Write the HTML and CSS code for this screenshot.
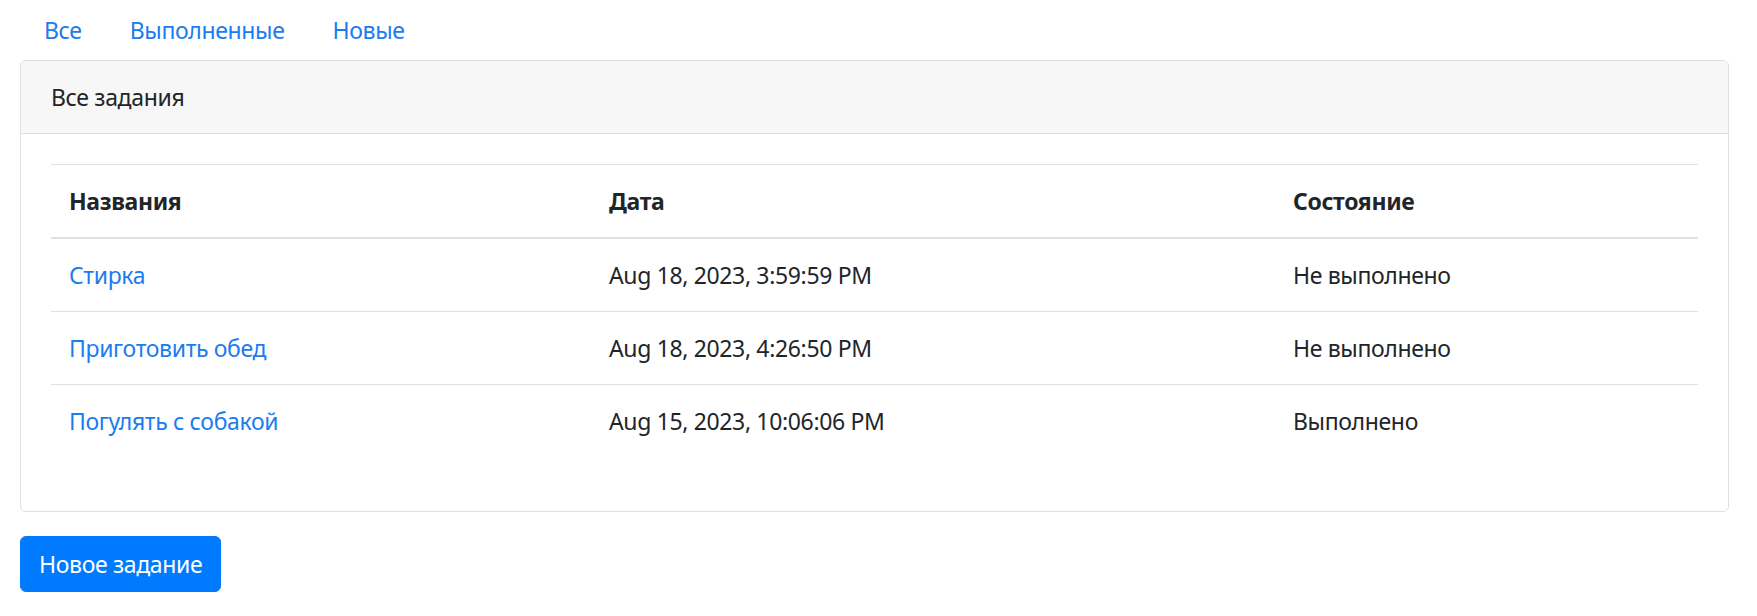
FILE: index.html
```html
<!DOCTYPE html>
<html lang="ru">
<head>
<meta charset="utf-8">
<title>Задания</title>
<link rel="stylesheet" href="styles.css">
</head>
<body>
<div class="page">
  <nav class="nav">
    <a class="nav-link" href="#">Все</a>
    <a class="nav-link" href="#">Выполненные</a>
    <a class="nav-link" href="#">Новые</a>
  </nav>
  <div class="card">
    <div class="card-header">Все задания</div>
    <div class="card-body">
      <table class="table">
        <colgroup>
          <col class="c1"><col class="c2"><col class="c3">
        </colgroup>
        <thead>
          <tr><th>Названия</th><th>Дата</th><th>Состояние</th></tr>
        </thead>
        <tbody>
          <tr><td><a href="#">Стирка</a></td><td>Aug 18, 2023, 3:59:59 PM</td><td>Не выполнено</td></tr>
          <tr><td><a href="#">Приготовить обед</a></td><td>Aug 18, 2023, 4:26:50 PM</td><td>Не выполнено</td></tr>
          <tr><td><a href="#">Погулять с собакой</a></td><td>Aug 15, 2023, 10:06:06 PM</td><td>Выполнено</td></tr>
        </tbody>
      </table>
    </div>
  </div>
  <button class="btn" type="button">Новое задание</button>
</div>
</body>
</html>
```

FILE: styles.css
```css
* { box-sizing: border-box; }
html, body { margin: 0; padding: 0; background: #fff; }
body {
  font-family: "Noto Sans", "Open Sans", "Liberation Sans", sans-serif;
  font-size: 23px;
  letter-spacing: -0.35px;
  line-height: 36px;
  color: #212529;
}
.page {
  padding: 0 28px 0 20px;
}
.nav {
  display: flex;
}
.nav-link {
  display: block;
  padding: 12px 24px;
  color: #1a7cf0;
  text-decoration: none;
}
.card {
  border: 1px solid #dfdfdf;
  border-radius: 6px;
  overflow: hidden;
}
.card-header {
  background: #f7f7f7;
  border-bottom: 1px solid #dfdfdf;
  padding: 18px 30px;
}
.card-body {
  padding: 30px;
}
.table {
  width: 100%;
  border-collapse: collapse;
  margin-bottom: 24px;
  table-layout: fixed;
}
.c1 { width: 540px; }
.c2 { width: 684px; }
.table th, .table td {
  text-align: left;
  padding: 18px;
  border-top: 1px solid #dee2e6;
  vertical-align: top;
}
.table th {
  font-weight: 700;
  border-bottom: 2px solid #dee2e6;
}
.table a {
  color: #1a7cf0;
  text-decoration: none;
}
.btn {
  margin-top: 24px;
  font-family: inherit;
  font-size: 23px;
  letter-spacing: -0.35px;
  line-height: 36px;
  color: #fff;
  background: #007bff;
  border: 1px solid #007bff;
  border-radius: 6px;
  padding: 9px 18px;
  cursor: pointer;
}
```
